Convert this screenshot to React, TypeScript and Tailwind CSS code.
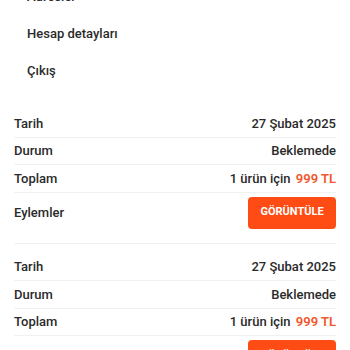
const menu = ["Adresler", "Hesap detayları", "Çıkış"];

type Order = { date: string; status: string; count: number; total: string };

const orders: Order[] = [
  { date: "27 Şubat 2025", status: "Beklemede", count: 1, total: "999 TL" },
  { date: "27 Şubat 2025", status: "Beklemede", count: 1, total: "999 TL" },
];

function Row({ label, children }: { label: string; children: React.ReactNode }) {
  return (
    <div className="flex h-[27.5px] items-center justify-between border-b border-[#f1f1f1]">
      <span className="font-medium text-[#2a2a2a]">{label}</span>
      <span className="font-medium text-[#2a2a2a]">{children}</span>
    </div>
  );
}

export default function App() {
  return (
    <div
      className="h-[350px] w-[350px] overflow-hidden bg-white text-[13px]"
      style={{ fontFamily: "Roboto, 'Noto Sans', sans-serif" }}
    >
      {/* account menu */}
      <ul className="-mt-[22px]">
        {menu.map((item) => (
          <li key={item} className="flex h-[37px] items-center pl-[27px] font-medium text-[#2a2a2a]">
            {item}
          </li>
        ))}
      </ul>

      {/* orders */}
      <div className="mt-[21px] flex flex-col gap-[10px] px-[14px]">
        {orders.map((o, i) => (
          <div key={i}>
            <Row label="Tarih">{o.date}</Row>
            <Row label="Durum">{o.status}</Row>
            <Row label="Toplam">
              {o.count} ürün için <span className="ml-[2px] font-semibold text-[#f2552a]">{o.total}</span>
            </Row>
            <div className="flex items-start justify-between border-b border-[#f1f1f1] pt-[4px] pb-[14px]">
              <span className="flex h-8 items-center font-medium text-[#2a2a2a]">Eylemler</span>
              <button className="h-8 w-[88px] rounded-[4px] bg-[#ff4b14] text-[11px] font-bold uppercase text-white">
                Görüntüle
              </button>
            </div>
          </div>
        ))}
      </div>
    </div>
  );
}
